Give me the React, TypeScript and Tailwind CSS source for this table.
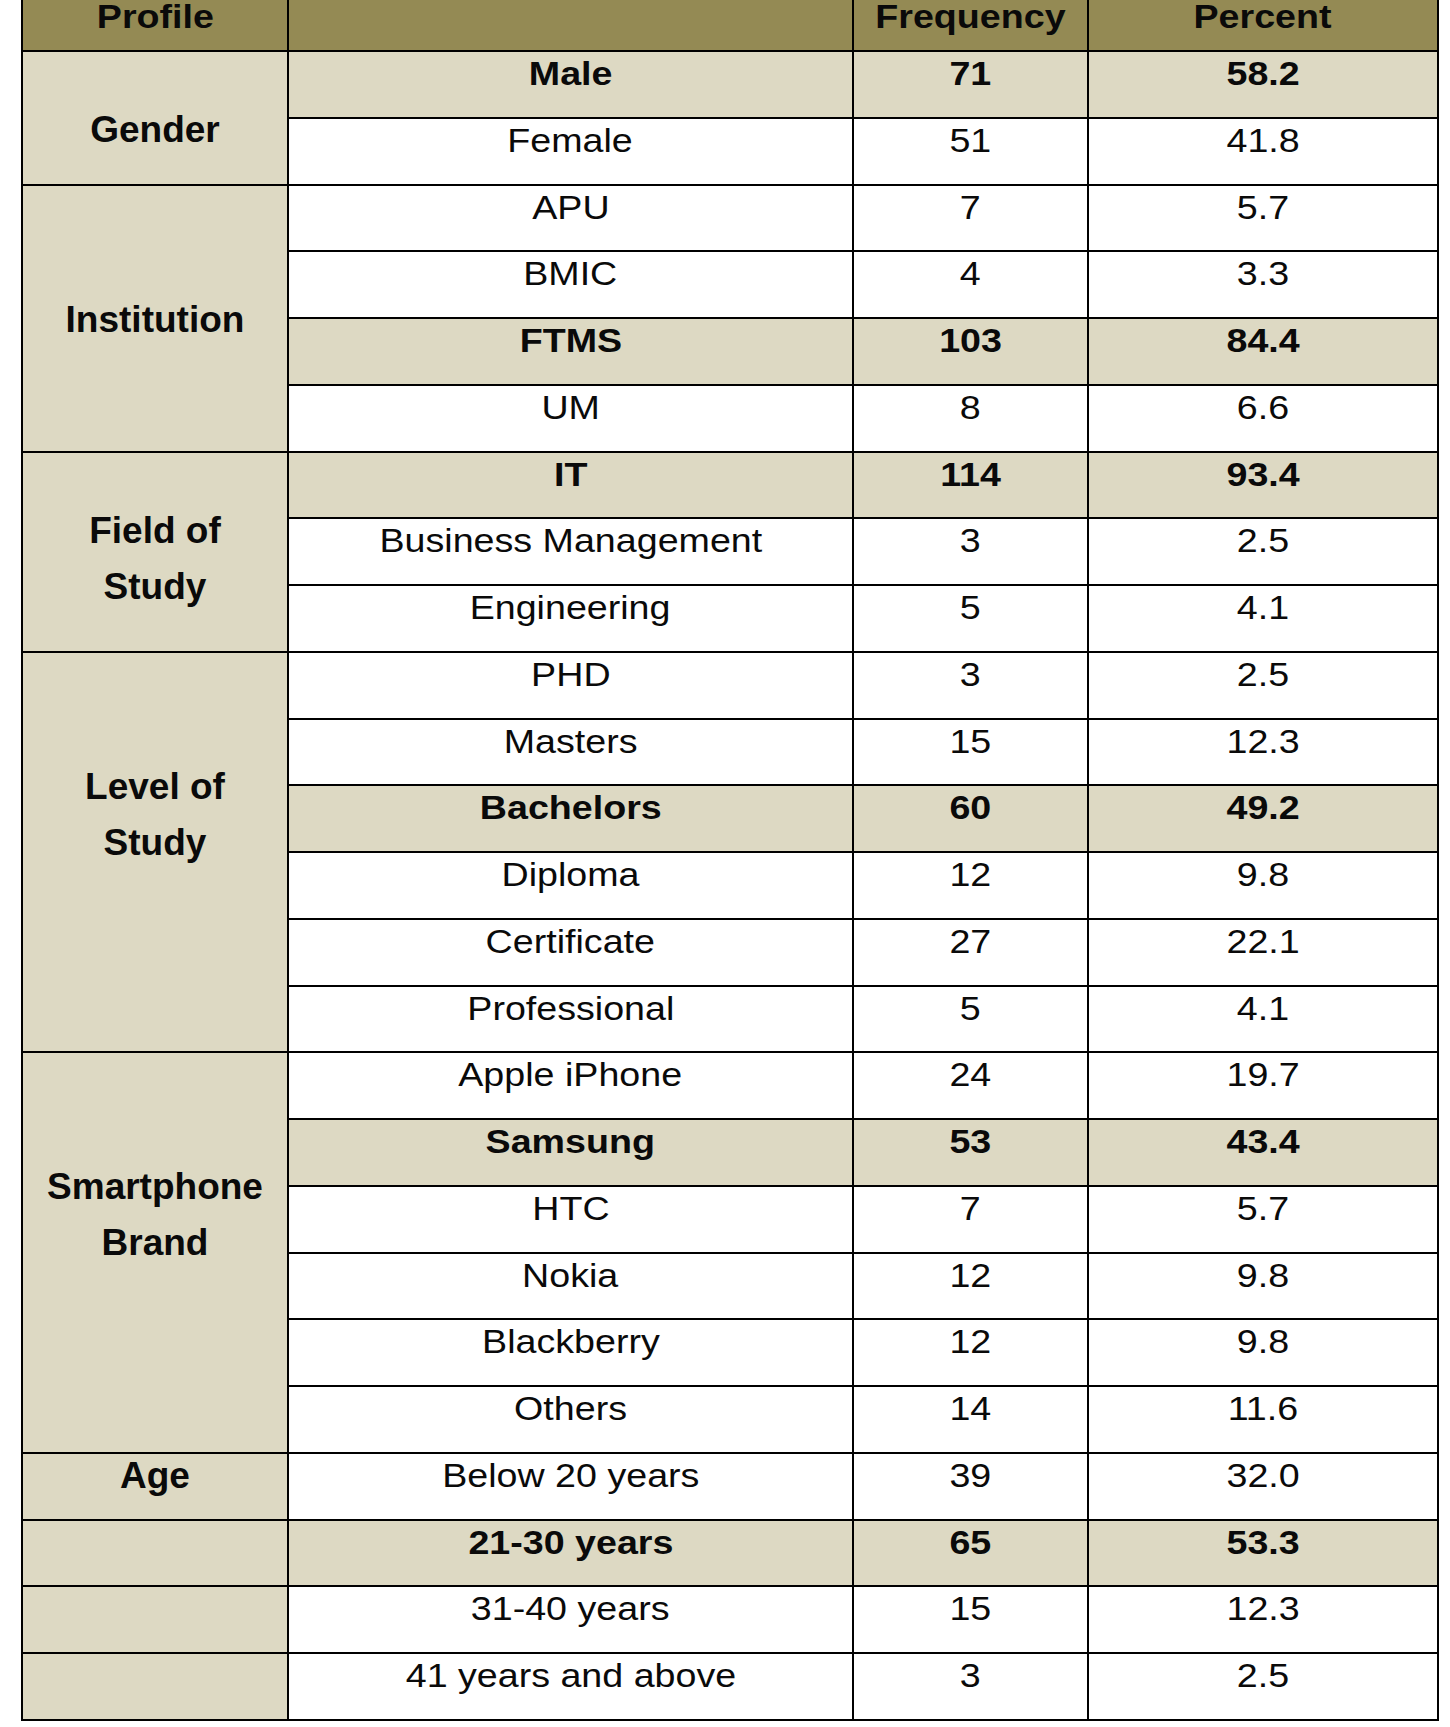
type DataRow = {
  label: string;
  freq: string;
  pct: string;
  bold?: boolean;
};

type Group = {
  lines: string[];
  span: string;
  pad: string;
};

const rows: DataRow[] = [
  { label: "Male", freq: "71", pct: "58.2", bold: true },
  { label: "Female", freq: "51", pct: "41.8" },
  { label: "APU", freq: "7", pct: "5.7" },
  { label: "BMIC", freq: "4", pct: "3.3" },
  { label: "FTMS", freq: "103", pct: "84.4", bold: true },
  { label: "UM", freq: "8", pct: "6.6" },
  { label: "IT", freq: "114", pct: "93.4", bold: true },
  { label: "Business Management", freq: "3", pct: "2.5" },
  { label: "Engineering", freq: "5", pct: "4.1" },
  { label: "PHD", freq: "3", pct: "2.5" },
  { label: "Masters", freq: "15", pct: "12.3" },
  { label: "Bachelors", freq: "60", pct: "49.2", bold: true },
  { label: "Diploma", freq: "12", pct: "9.8" },
  { label: "Certificate", freq: "27", pct: "22.1" },
  { label: "Professional", freq: "5", pct: "4.1" },
  { label: "Apple iPhone", freq: "24", pct: "19.7" },
  { label: "Samsung", freq: "53", pct: "43.4", bold: true },
  { label: "HTC", freq: "7", pct: "5.7" },
  { label: "Nokia", freq: "12", pct: "9.8" },
  { label: "Blackberry", freq: "12", pct: "9.8" },
  { label: "Others", freq: "14", pct: "11.6" },
  { label: "Below 20 years", freq: "39", pct: "32.0" },
  { label: "21-30 years", freq: "65", pct: "53.3", bold: true },
  { label: "31-40 years", freq: "15", pct: "12.3" },
  { label: "41 years and above", freq: "3", pct: "2.5" },
];

// profile column: keyed by the row index where the merged cell starts
const groups: Record<number, Group> = {
  0: { lines: ["Gender"], span: "row-span-2", pad: "pt-[56px]" },
  2: { lines: ["Institution"], span: "row-span-4", pad: "pt-[112px]" },
  6: { lines: ["Field of", "Study"], span: "row-span-3", pad: "pt-[56px]" },
  9: { lines: ["Level of", "Study"], span: "row-span-6", pad: "pt-[112px]" },
  15: { lines: ["Smartphone", "Brand"], span: "row-span-6", pad: "pt-[112px]" },
  21: { lines: ["Age"], span: "row-span-1", pad: "pt-0" },
  22: { lines: [], span: "row-span-1", pad: "pt-0" },
  23: { lines: [], span: "row-span-1", pad: "pt-0" },
  24: { lines: [], span: "row-span-1", pad: "pt-0" },
};

function HeadCell({ text }: { text: string }) {
  return (
    <div className="bg-[#948a54] text-center text-[33px] font-bold leading-[34px] whitespace-nowrap">
      <span className="inline-block scale-x-[1.14]">{text}</span>
    </div>
  );
}

function Cell({ text, bold }: { text: string; bold?: boolean }) {
  return (
    <div
      className={
        bold
          ? "bg-[#ddd9c3] pt-[3px] text-center text-[33px] font-bold leading-[38px] whitespace-nowrap"
          : "bg-white pt-[3px] text-center text-[33px] leading-[38px] whitespace-nowrap"
      }
    >
      <span className="inline-block scale-x-[1.14]">{text}</span>
    </div>
  );
}

export default function App() {
  return (
    <div className="min-h-screen bg-white font-['Liberation_Sans',Arial,sans-serif] text-[#0a0a0a]">
      <div className="ml-[21px] grid w-fit grid-cols-[264px_563px_233px_348px] grid-rows-[50px_repeat(25,64.75px)] gap-[2px] bg-black px-[2px] pb-[2px]">
        <HeadCell text="Profile" />
        <HeadCell text="" />
        <HeadCell text="Frequency" />
        <HeadCell text="Percent" />

        {rows.map((row, i) => {
          const group = groups[i];
          return [
            group && (
              <div
                key={`g${i}`}
                className={`${group.span} ${group.pad} flex flex-col items-center gap-[12px] bg-[#ddd9c3] text-center text-[37px] font-bold leading-[44px]`}
              >
                {group.lines.map((line) => (
                  <div key={line}>{line}</div>
                ))}
              </div>
            ),
            <Cell key={`l${i}`} text={row.label} bold={row.bold} />,
            <Cell key={`f${i}`} text={row.freq} bold={row.bold} />,
            <Cell key={`p${i}`} text={row.pct} bold={row.bold} />,
          ];
        })}
      </div>
    </div>
  );
}
